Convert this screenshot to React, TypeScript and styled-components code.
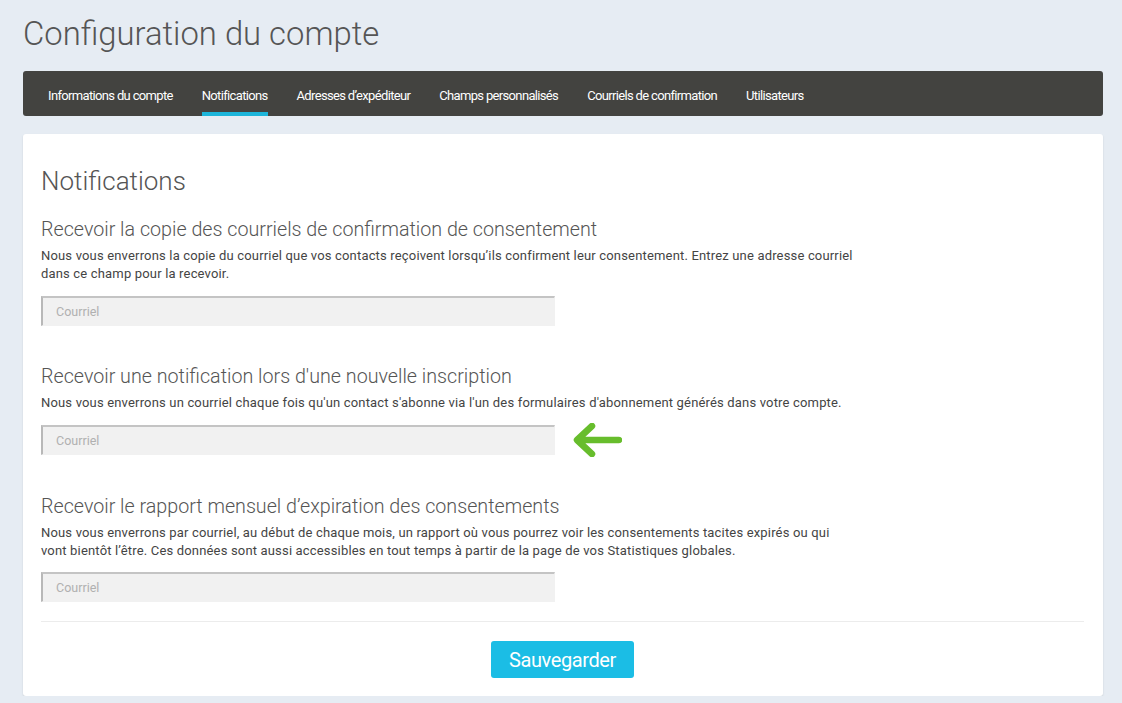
import React from "react";
import styled, { createGlobalStyle } from "styled-components";

const Global = createGlobalStyle`
  html, body { margin: 0; padding: 0; }
  body {
    background: #e6ecf3;
    font-family: Roboto, "Liberation Sans", Arial, sans-serif;
    color: #444;
  }
  * { box-sizing: border-box; }
`;

const Page = styled.div`
  padding: 0 19px 0 23px;
  display: flex;
  flex-direction: column;
`;

const Title = styled.h1`
  margin: 12px 0 0 0;
  font-size: 32.8px;
  line-height: 44px;
  font-weight: 300;
  color: #555;
`;

const NavBar = styled.nav`
  margin-top: 15px;
  height: 45px;
  background: #434340;
  border-radius: 3px;
  display: flex;
  align-items: stretch;
  padding-left: 25px;
  gap: 29px;
`;

const Tab = styled.a<{ $active?: boolean }>`
  display: flex;
  align-items: center;
  color: #fff;
  font-size: 13px;
  letter-spacing: -0.66px;
  text-decoration: none;
  cursor: pointer;
  padding-top: 4px;
  box-shadow: ${(p) => (p.$active ? "inset 0 -4px 0 #1cb5da" : "none")};
`;

const Card = styled.section`
  margin-top: 18px;
  background: #fff;
  border-radius: 3px;
  box-shadow: 0 1px 2px rgba(0, 0, 0, 0.12);
  padding: 30px 19px 18px 18px;
  display: flex;
  flex-direction: column;
`;

const CardTitle = styled.h2`
  margin: 0;
  font-size: 26px;
  line-height: 34px;
  font-weight: 300;
  color: #555;
`;

const Section = styled.div<{ $top: number }>`
  margin-top: ${(p) => p.$top}px;
  display: flex;
  flex-direction: column;
`;

const SectionTitle = styled.h3`
  margin: 0;
  font-size: 19.7px;
  line-height: 26px;
  font-weight: 300;
  color: #555;
`;

const Desc = styled.p`
  margin: 4px 0 0 0;
  max-width: 814px;
  font-size: 13px;
  letter-spacing: 0.17px;
  line-height: 18px;
  color: #444;
`;

const FieldRow = styled.div<{ $top?: number }>`
  margin-top: ${(p) => p.$top ?? 13}px;
  display: flex;
  align-items: center;
  gap: 17px;
`;

const EmailInput = styled.input`
  width: 514px;
  height: 30px;
  background: #f1f1f1;
  border: 1px solid;
  border-color: #c4c4c4 #f1f1f1 #f1f1f1 #b8b8b8;
  border-top-width: 2px;
  border-left-width: 2px;
  padding: 0 0 0 13px;
  font-family: Roboto, "Liberation Sans", Arial, sans-serif;
  font-size: 12.5px;
  color: #444;
  caret-color: #222;
  outline: none;
  &::placeholder { color: #b0b0b0; }
`;

const Divider = styled.hr`
  margin: 19px 0 0 0;
  border: 0;
  border-top: 1px solid #ececec;
`;

const Footer = styled.div`
  display: flex;
  justify-content: center;
  margin-top: 19px;
`;

const SaveButton = styled.button`
  width: 143px;
  height: 37px;
  background: #1bbde5;
  border: 0;
  border-radius: 3px;
  color: #fff;
  font-family: Roboto, "Liberation Sans", Arial, sans-serif;
  font-size: 20px;
  letter-spacing: -0.4px;
  cursor: pointer;
`;

const Arrow = () => (
  <svg width="50" height="34" viewBox="0 0 50 34" fill="none">
    <path
      d="M47 17 H6 M20 3 L5 17 L20 31"
      stroke="#67bd2c"
      strokeWidth="6.5"
      strokeLinecap="round"
      strokeLinejoin="round"
    />
  </svg>
);

const tabs = [
  "Informations du compte",
  "Notifications",
  "Adresses d’expéditeur",
  "Champs personnalisés",
  "Courriels de confirmation",
  "Utilisateurs",
];

export default function App() {
  return (
    <>
      <Global />
      <Page>
        <Title>Configuration du compte</Title>
        <NavBar>
          {tabs.map((t) => (
            <Tab key={t} $active={t === "Notifications"}>
              {t}
            </Tab>
          ))}
        </NavBar>
        <Card>
          <CardTitle>Notifications</CardTitle>
          <Section $top={19}>
            <SectionTitle>Recevoir la copie des courriels de confirmation de consentement</SectionTitle>
            <Desc>
              Nous vous enverrons la copie du courriel que vos contacts reçoivent lorsqu’ils confirment leur
              consentement. Entrez une adresse courriel dans ce champ pour la recevoir.
            </Desc>
            <FieldRow>
              <EmailInput placeholder="Courriel" />
            </FieldRow>
          </Section>
          <Section $top={38}>
            <SectionTitle>Recevoir une notification lors d'une nouvelle inscription</SectionTitle>
            <Desc>
              Nous vous enverrons un courriel chaque fois qu'un contact s'abonne via l'un des formulaires
              d'abonnement générés dans votre compte.
            </Desc>
            <FieldRow $top={11}>
              <EmailInput placeholder="Courriel" />
              <Arrow />
            </FieldRow>
          </Section>
          <Section $top={37}>
            <SectionTitle>Recevoir le rapport mensuel d’expiration des consentements</SectionTitle>
            <Desc>
              Nous vous enverrons par courriel, au début de chaque mois, un rapport où vous pourrez voir les
              consentements tacites expirés ou qui vont bientôt l’être. Ces données sont aussi accessibles en
              tout temps à partir de la page de vos Statistiques globales.
            </Desc>
            <FieldRow $top={12}>
              <EmailInput placeholder="Courriel" autoFocus />
            </FieldRow>
          </Section>
          <Divider />
          <Footer>
            <SaveButton>Sauvegarder</SaveButton>
          </Footer>
        </Card>
      </Page>
    </>
  );
}
